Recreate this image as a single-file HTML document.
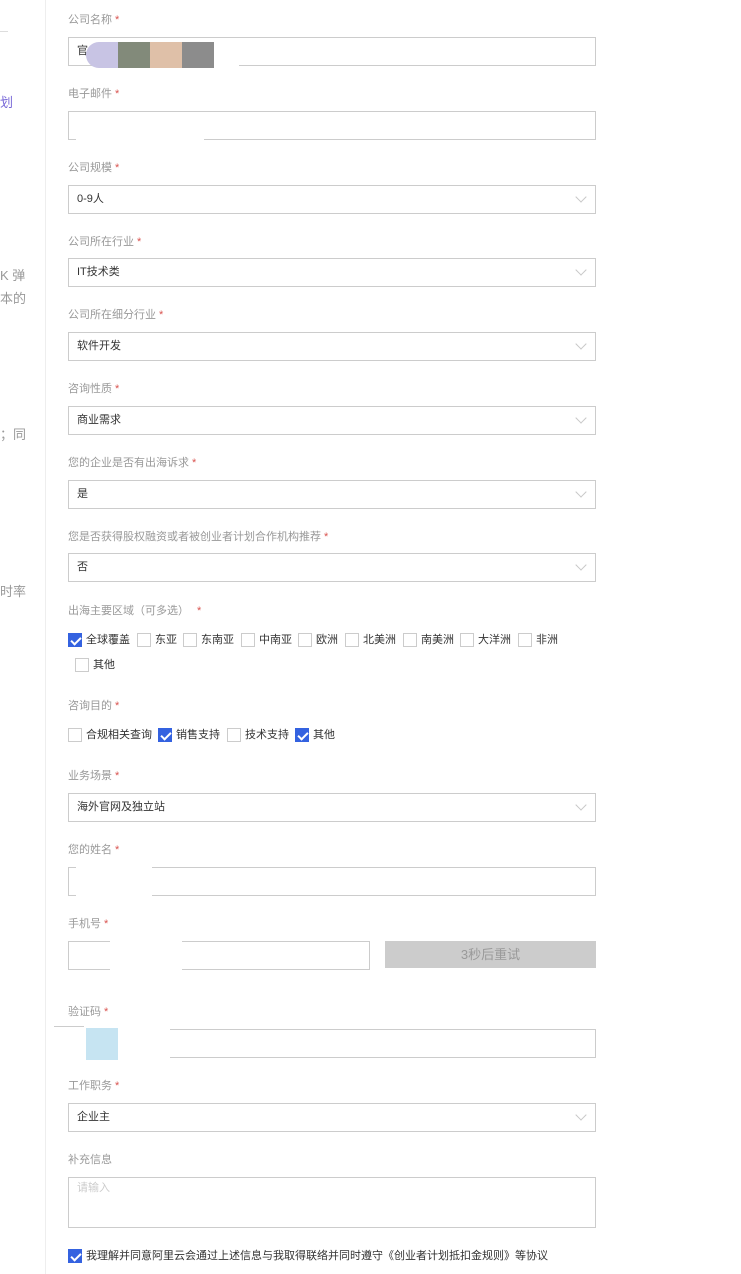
<!DOCTYPE html>
<html><head><meta charset="utf-8"><style>
*{margin:0;padding:0;box-sizing:border-box}
body{width:741px;height:1274px;background:#fff;position:relative;overflow:hidden;font-family:"Liberation Sans","Noto Sans CJK SC",sans-serif;font-size:11px;color:#333}
.a{position:absolute;white-space:nowrap}
.lb{color:#999;font-size:11px;line-height:14px}
.lb i{font-style:normal;color:#d9534f;margin-left:3px}
.in{position:absolute;left:68px;width:528px;height:29px;border:1px solid #ccc;background:#fff;line-height:27px;padding-left:8px;font-size:11px;color:#333}
.sel::after{content:"";position:absolute;right:10px;top:7px;width:7px;height:7px;border-right:1px solid #c8c8c8;border-bottom:1px solid #c8c8c8;transform:rotate(45deg)}
.cb{position:absolute;width:14px;height:14px;border:1px solid #ccc;background:#fff}
.cb.on{background:#3462e0;border-color:#3462e0}
.cb.on::after{content:"";position:absolute;left:4px;top:1px;width:4px;height:8px;border-right:2px solid #fff;border-bottom:2px solid #fff;transform:rotate(45deg)}
.ct{position:absolute;font-size:11px;color:#333;line-height:14px;white-space:nowrap}
.side{color:#999;font-size:13px}
</style></head><body>
<div class="a" style="left:45px;top:0;width:1px;height:1274px;background:#eee"></div>
<div class="a" style="left:0;top:31px;width:8px;height:1px;background:#ddd"></div>
<div class="a side" style="left:0;top:92px;color:#7a6ad8">划</div>
<div class="a side" style="left:0;top:265px">K 弹</div>
<div class="a side" style="left:0;top:288px">本的</div>
<div class="a side" style="left:0;top:424px">；同</div>
<div class="a side" style="left:0;top:581px">时率</div>

<div class="a lb" style="left:68px;top:13px">公司名称<i>*</i></div>
<div class="in" style="top:37px">官</div>
<div class="a" style="left:86px;top:42px;width:34px;height:26px;background:#c8c4e4;border-radius:13px 0 0 13px"></div>
<div class="a" style="left:118px;top:42px;width:32px;height:26px;background:#828a7a"></div>
<div class="a" style="left:150px;top:42px;width:32px;height:26px;background:#dfc0a8"></div>
<div class="a" style="left:182px;top:42px;width:32px;height:26px;background:#8c8c8c"></div>
<div class="a" style="left:214px;top:62px;width:25px;height:6px;background:#fff"></div>

<div class="a lb" style="left:68px;top:87px">电子邮件<i>*</i></div>
<div class="in" style="top:111px"></div>
<div class="a" style="left:76px;top:136px;width:128px;height:6px;background:#fff"></div>

<div class="a lb" style="left:68px;top:161px">公司规模<i>*</i></div>
<div class="in sel" style="top:185px">0-9人</div>
<div class="a lb" style="left:68px;top:235px">公司所在行业<i>*</i></div>
<div class="in sel" style="top:258px">IT技术类</div>
<div class="a lb" style="left:68px;top:308px">公司所在细分行业<i>*</i></div>
<div class="in sel" style="top:332px">软件开发</div>
<div class="a lb" style="left:68px;top:382px">咨询性质<i>*</i></div>
<div class="in sel" style="top:406px">商业需求</div>
<div class="a lb" style="left:68px;top:456px">您的企业是否有出海诉求<i>*</i></div>
<div class="in sel" style="top:480px">是</div>
<div class="a lb" style="left:68px;top:530px">您是否获得股权融资或者被创业者计划合作机构推荐<i>*</i></div>
<div class="in sel" style="top:553px">否</div>

<div class="a lb" style="left:68px;top:604px">出海主要区域（可多选）<i style="margin-left:8px">*</i></div>
<div class="cb on" style="left:68px;top:633px"></div><div class="ct" style="left:86px;top:633px">全球覆盖</div>
<div class="cb" style="left:137px;top:633px"></div><div class="ct" style="left:155px;top:633px">东亚</div>
<div class="cb" style="left:183px;top:633px"></div><div class="ct" style="left:201px;top:633px">东南亚</div>
<div class="cb" style="left:241px;top:633px"></div><div class="ct" style="left:259px;top:633px">中南亚</div>
<div class="cb" style="left:298px;top:633px"></div><div class="ct" style="left:316px;top:633px">欧洲</div>
<div class="cb" style="left:345px;top:633px"></div><div class="ct" style="left:363px;top:633px">北美洲</div>
<div class="cb" style="left:403px;top:633px"></div><div class="ct" style="left:421px;top:633px">南美洲</div>
<div class="cb" style="left:460px;top:633px"></div><div class="ct" style="left:478px;top:633px">大洋洲</div>
<div class="cb" style="left:518px;top:633px"></div><div class="ct" style="left:536px;top:633px">非洲</div>
<div class="cb" style="left:75px;top:658px"></div><div class="ct" style="left:93px;top:658px">其他</div>

<div class="a lb" style="left:68px;top:699px">咨询目的<i>*</i></div>
<div class="cb" style="left:68px;top:728px"></div><div class="ct" style="left:86px;top:728px">合规相关查询</div>
<div class="cb on" style="left:158px;top:728px"></div><div class="ct" style="left:176px;top:728px">销售支持</div>
<div class="cb" style="left:227px;top:728px"></div><div class="ct" style="left:245px;top:728px">技术支持</div>
<div class="cb on" style="left:295px;top:728px"></div><div class="ct" style="left:313px;top:728px">其他</div>

<div class="a lb" style="left:68px;top:769px">业务场景<i>*</i></div>
<div class="in sel" style="top:793px">海外官网及独立站</div>
<div class="a lb" style="left:68px;top:843px">您的姓名<i>*</i></div>
<div class="in" style="top:867px"></div>
<div class="a" style="left:76px;top:858px;width:76px;height:38px;background:#fff"></div>
<div class="a lb" style="left:68px;top:917px">手机号<i>*</i></div>
<div class="in" style="top:941px;width:302px"></div>
<div class="a" style="left:110px;top:938px;width:72px;height:34px;background:#fff"></div>
<div class="a" style="left:385px;top:941px;width:211px;height:27px;background:#cccccc;color:#999;text-align:center;line-height:27px;font-size:13px">3秒后重试</div>
<div class="a lb" style="left:68px;top:1005px">验证码<i>*</i></div>
<div class="in" style="top:1029px"></div>
<div class="a" style="left:54px;top:1026px;width:116px;height:34px;background:#fff"></div>
<div class="a" style="left:54px;top:1026px;width:30px;height:1px;background:#ccc"></div>
<div class="a" style="left:86px;top:1028px;width:32px;height:32px;background:#c6e4f2"></div>
<div class="a lb" style="left:68px;top:1079px">工作职务<i>*</i></div>
<div class="in sel" style="top:1103px">企业主</div>
<div class="a lb" style="left:68px;top:1153px">补充信息</div>
<div class="in" style="top:1177px;height:51px;line-height:18px;color:#ccc;padding-top:1px">请输入</div>
<div class="cb on" style="left:68px;top:1249px"></div>
<div class="ct" style="left:86px;top:1249px">我理解并同意阿里云会通过上述信息与我取得联络并同时遵守《创业者计划抵扣金规则》等协议</div>
</body></html>
